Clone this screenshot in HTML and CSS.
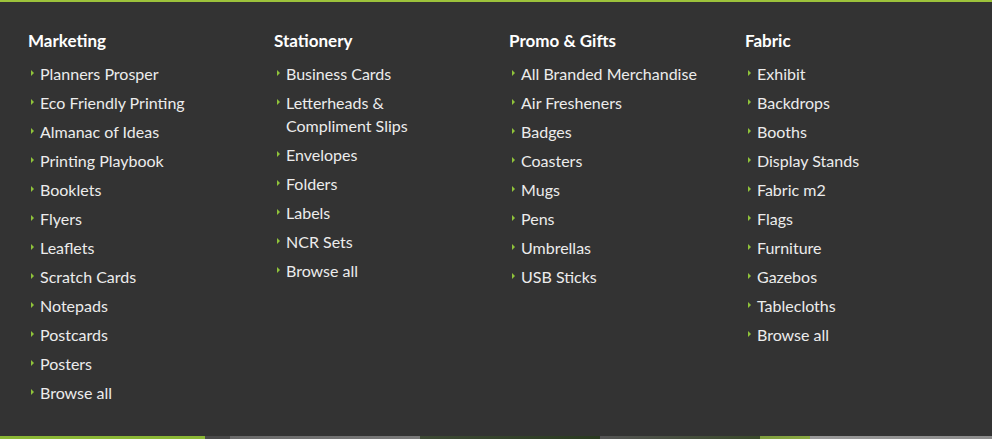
FILE: index.html
```html
<!DOCTYPE html>
<html lang="en">
<head>
<meta charset="utf-8">
<title>Menu</title>
<link rel="stylesheet" href="styles.css">
</head>
<body>
<nav class="mega">
  <div class="col">
    <h3 class="heading">Marketing</h3>
    <ul class="list">
      <li>Planners Prosper</li>
      <li>Eco Friendly Printing</li>
      <li>Almanac of Ideas</li>
      <li>Printing Playbook</li>
      <li>Booklets</li>
      <li>Flyers</li>
      <li>Leaflets</li>
      <li>Scratch Cards</li>
      <li>Notepads</li>
      <li>Postcards</li>
      <li>Posters</li>
      <li>Browse all</li>
    </ul>
  </div>
  <div class="col">
    <h3 class="heading">Stationery</h3>
    <ul class="list">
      <li>Business Cards</li>
      <li>Letterheads &amp; Compliment Slips</li>
      <li>Envelopes</li>
      <li>Folders</li>
      <li>Labels</li>
      <li>NCR Sets</li>
      <li>Browse all</li>
    </ul>
  </div>
  <div class="col">
    <h3 class="heading">Promo &amp; Gifts</h3>
    <ul class="list">
      <li>All Branded Merchandise</li>
      <li>Air Fresheners</li>
      <li>Badges</li>
      <li>Coasters</li>
      <li>Mugs</li>
      <li>Pens</li>
      <li>Umbrellas</li>
      <li>USB Sticks</li>
    </ul>
  </div>
  <div class="col">
    <h3 class="heading">Fabric</h3>
    <ul class="list">
      <li>Exhibit</li>
      <li>Backdrops</li>
      <li>Booths</li>
      <li>Display Stands</li>
      <li>Fabric m2</li>
      <li>Flags</li>
      <li>Furniture</li>
      <li>Gazebos</li>
      <li>Tablecloths</li>
      <li>Browse all</li>
    </ul>
  </div>
</nav>
<div class="strip"></div>
</body>
</html>
```
FILE: styles.css
```css
html, body {
  margin: 0;
  padding: 0;
  background: #333333;
  overflow: hidden;
}
body {
  width: 992px;
  height: 439px;
  font-family: Lato, "Open Sans", sans-serif;
}
.mega {
  box-sizing: border-box;
  height: 436px;
  border-top: 2px solid #9dc33b;
  background: #333333;
  padding: 27px 0 0 28px;
  display: grid;
  grid-template-columns: 246px 235px 236px 1fr;
  align-items: start;
}
.heading {
  margin: 0 0 10px 0;
  font-size: 17px;
  line-height: 23px;
  font-weight: 700;
  color: #ffffff;
}
.list {
  list-style: none;
  margin: 0;
  padding: 0;
  width: 192px;
}
.list li {
  position: relative;
  padding-left: 12px;
  margin-bottom: 6px;
  font-size: 16px;
  line-height: 23px;
  color: #ececec;
}
.list li::before {
  content: "";
  position: absolute;
  left: 3px;
  top: 8px;
  border-left: 3px solid #8fc33a;
  border-top: 3px solid transparent;
  border-bottom: 3px solid transparent;
}
.strip {
  height: 3px;
  background: linear-gradient(to right,
    #8bb735 0, #8bb735 205px,
    #4a4a4a 205px, #4a4a4a 230px,
    #6a6a6a 230px, #7a7a7a 420px,
    #3e4a35 420px, #2a3a20 600px,
    #555 600px, #3a4a2a 760px,
    #7f9e3e 760px, #8aa842 810px,
    #9a9a9a 810px, #8c8c8c 992px);
}
```
